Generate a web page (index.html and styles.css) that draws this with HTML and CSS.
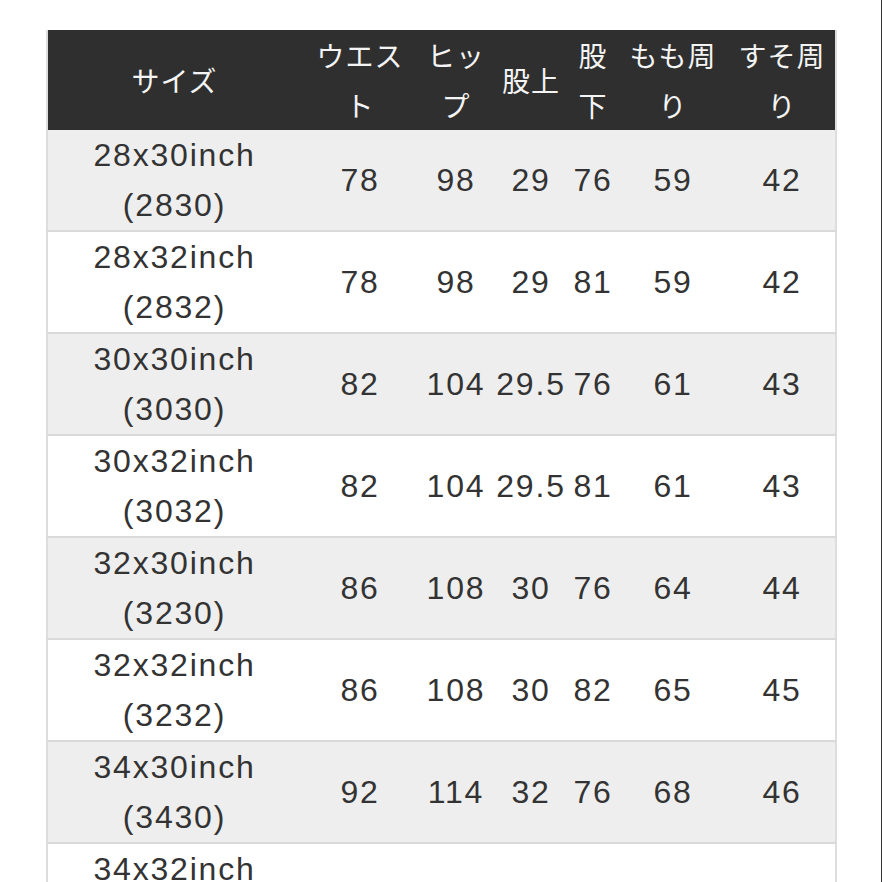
FILE: index.html
```html
<!DOCTYPE html>
<html lang="ja">
<head>
<meta charset="utf-8">
<title>サイズ表</title>
<link rel="stylesheet" href="styles.css">
</head>
<body>
<div class="page">
  <table class="size-table">
    <colgroup>
      <col class="c-size">
      <col class="c-waist">
      <col class="c-hip">
      <col class="c-rise">
      <col class="c-inseam">
      <col class="c-thigh">
      <col class="c-hem">
    </colgroup>
    <thead>
      <tr>
        <th>サイズ</th>
        <th>ウエスト</th>
        <th>ヒップ</th>
        <th>股上</th>
        <th>股下</th>
        <th>もも周り</th>
        <th>すそ周り</th>
      </tr>
    </thead>
    <tbody>
      <tr><td>28x30inch<br>(2830)</td><td>78</td><td>98</td><td>29</td><td>76</td><td>59</td><td>42</td></tr>
      <tr><td>28x32inch<br>(2832)</td><td>78</td><td>98</td><td>29</td><td>81</td><td>59</td><td>42</td></tr>
      <tr><td>30x30inch<br>(3030)</td><td>82</td><td>104</td><td>29.5</td><td>76</td><td>61</td><td>43</td></tr>
      <tr><td>30x32inch<br>(3032)</td><td>82</td><td>104</td><td>29.5</td><td>81</td><td>61</td><td>43</td></tr>
      <tr><td>32x30inch<br>(3230)</td><td>86</td><td>108</td><td>30</td><td>76</td><td>64</td><td>44</td></tr>
      <tr><td>32x32inch<br>(3232)</td><td>86</td><td>108</td><td>30</td><td>82</td><td>65</td><td>45</td></tr>
      <tr><td>34x30inch<br>(3430)</td><td>92</td><td>114</td><td>32</td><td>76</td><td>68</td><td>46</td></tr>
      <tr><td>34x32inch<br>(3432)</td><td>92</td><td>114</td><td>32</td><td>81</td><td>68</td><td>46</td></tr>
    </tbody>
  </table>
</div>
</body>
</html>
```
FILE: styles.css
```css
html, body {
  margin: 0;
  padding: 0;
  background: #ffffff;
}

.page {
  box-sizing: border-box;
  min-height: 882px;
  padding: 30px 0 0 46px;
  border-right: 1px solid #333333;
  font-family: "Liberation Sans", "Noto Sans CJK JP", sans-serif;
  color: #333333;
}

.size-table {
  width: 789px;
  table-layout: fixed;
  border-collapse: collapse;
  border-left: 2px solid #dddddd;
  border-right: 2px solid #dddddd;
}

.c-size { width: 254px; }
.c-waist { width: 118px; }
.c-hip { width: 74px; }
.c-rise { width: 76px; }
.c-inseam { width: 48px; }
.c-thigh { width: 112px; }
.c-hem { width: 107px; }

.size-table th {
  background: #2f2f2f;
  color: #f4f4f4;
  font-family: "Noto Sans CJK JP", sans-serif;
  font-weight: 400;
  font-size: 28px;
  letter-spacing: 1px;
  line-height: 50px;
  height: 100px;
  padding: 0 5px;
  text-align: center;
  vertical-align: middle;
}

.size-table td {
  font-size: 32px;
  letter-spacing: 1.8px;
  line-height: 50px;
  height: 100px;
  padding: 0;
  text-align: center;
  vertical-align: middle;
  border-bottom: 2px solid #d9d9d9;
}

.size-table tbody tr:nth-child(odd) td {
  background: #eeeeee;
}

.size-table tbody tr:nth-child(even) td {
  background: #ffffff;
}
```
